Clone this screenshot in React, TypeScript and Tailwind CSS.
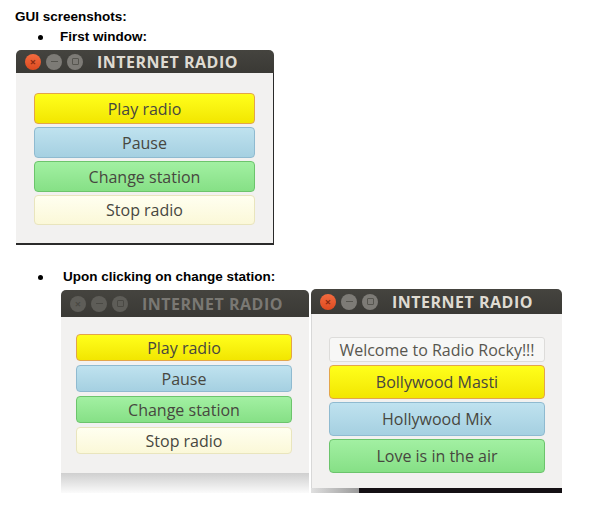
import type { ReactNode } from "react";

type Tone = "yellow" | "blue" | "green" | "cream";

const toneClass: Record<Tone, string> = {
  yellow: "bg-gradient-to-b from-[#ffff1a] to-[#f2e600] border-[#e3a54a]",
  blue: "bg-gradient-to-b from-[#bfe2ef] to-[#a5d0e1] border-[#8fbad0]",
  green: "bg-gradient-to-b from-[#a2f0a2] to-[#86e086] border-[#6cc46c]",
  cream: "bg-gradient-to-b from-[#fffff0] to-[#fbf8d8] border-[#e9e5bd]",
};

function RadioButton({ tone, h, children }: { tone: Tone; h: string; children: ReactNode }) {
  return (
    <div
      className={`flex ${h} items-center justify-center rounded-[4px] border text-[16px] text-[#47473f] ${toneClass[tone]}`}
    >
      {children}
    </div>
  );
}

function TitleBar({ active, h }: { active: boolean; h: string }) {
  return (
    <div
      className={`flex ${h} items-center rounded-t-[5px] bg-gradient-to-b from-[#45443f] to-[#3a3935] pl-[9px]`}
    >
      <div className="flex items-center gap-[5px]">
        <span
          className={`flex h-[16px] w-[16px] items-center justify-center rounded-full text-[11px] font-bold leading-none ${
            active ? "bg-gradient-to-b from-[#f36b3f] to-[#dc4a1f] text-[#8a2a10]" : "bg-[#5e5d58] text-[#4a4944]"
          }`}
        >
          ×
        </span>
        <span
          className={`flex h-[16px] w-[16px] items-center justify-center rounded-full ${
            active ? "bg-[#7d7b76]" : "bg-[#5e5d58]"
          }`}
        >
          <span className={`h-[1.5px] w-[7px] ${active ? "bg-[#56554f]" : "bg-[#4a4944]"}`} />
        </span>
        <span
          className={`flex h-[16px] w-[16px] items-center justify-center rounded-full ${
            active ? "bg-[#7d7b76]" : "bg-[#5e5d58]"
          }`}
        >
          <span className={`h-[7px] w-[7px] rounded-[1px] border ${active ? "border-[#56554f]" : "border-[#4a4944]"}`} />
        </span>
      </div>
      <span
        className={`ml-[14px] text-[16px] font-bold tracking-[0.5px] ${active ? "text-[#dfdbd2]" : "text-[#7a7873]"}`}
      >
        INTERNET RADIO
      </span>
    </div>
  );
}

export default function App() {
  const arial = { fontFamily: "'Liberation Sans', Arial, sans-serif" };
  return (
    <div
      className="relative h-[523px] w-[607px] overflow-hidden bg-white"
      style={{ fontFamily: "'Open Sans', 'Noto Sans', sans-serif" }}
    >
      <div className="pt-[9px] pl-[15px] text-[13.5px] font-bold leading-[16px] text-black" style={arial}>
        GUI screenshots:
      </div>
      <div className="mt-[4px] flex items-center pl-[38px] text-[13.5px] font-bold leading-[16px] text-black" style={arial}>
        <span className="mr-[17px] h-[5px] w-[5px] rounded-full bg-black" />
        First window:
      </div>

      {/* first window */}
      <div className="ml-[16px] mt-[5px] w-[258px]">
        <TitleBar active h="h-[23px]" />
        <div className="flex flex-col gap-[3px] border-b-2 border-r border-[#2a2a2a] bg-[#f2f1f0] px-[18px] pt-[20px] pb-[18px]">
          <RadioButton tone="yellow" h="h-[31px]">Play radio</RadioButton>
          <RadioButton tone="blue" h="h-[31px]">Pause</RadioButton>
          <RadioButton tone="green" h="h-[31px]">Change station</RadioButton>
          <RadioButton tone="cream" h="h-[30px]">Stop radio</RadioButton>
        </div>
      </div>

      <div className="mt-[24px] flex items-center pl-[38px] text-[13.5px] font-bold leading-[16px] text-black" style={arial}>
        <span className="mr-[20px] h-[5px] w-[5px] rounded-full bg-black" />
        Upon clicking on change station:
      </div>

      <div className="mt-[4px] flex items-start pl-[61px]">
        {/* back window (inactive) */}
        <div className="mt-[1px] w-[248px]">
          <TitleBar active={false} h="h-[27px]" />
          <div className="flex flex-col gap-[4px] bg-[#f2f1f0] pl-[15px] pr-[17px] pt-[17px] pb-[19px]">
            <RadioButton tone="yellow" h="h-[27px]">Play radio</RadioButton>
            <RadioButton tone="blue" h="h-[27px]">Pause</RadioButton>
            <RadioButton tone="green" h="h-[27px]">Change station</RadioButton>
            <RadioButton tone="cream" h="h-[27px]">Stop radio</RadioButton>
          </div>
          <div className="h-[20px] bg-gradient-to-b from-[#cfcfcf] to-[#fbfbfb]" />
        </div>

        {/* front window (active) */}
        <div className="ml-[2px] w-[251px]">
          <TitleBar active h="h-[25px]" />
          <div className="flex flex-col gap-[3px] border-l border-[#d8d8d8] bg-[#f2f1f0] px-[17px] pt-[23px] pb-[15px]">
            <div className="flex h-[25px] items-center justify-center rounded-[3px] border border-[#dddcda] bg-[#f7f7f6] text-[16px] text-[#57564f]">
              Welcome to Radio Rocky!!!
            </div>
            <RadioButton tone="yellow" h="h-[34px]">Bollywood Masti</RadioButton>
            <RadioButton tone="blue" h="h-[34px]">Hollywood Mix</RadioButton>
            <RadioButton tone="green" h="h-[34px]">Love is in the air</RadioButton>
          </div>
          <div className="flex h-[5px]">
            <div className="w-[48px] bg-gradient-to-r from-[#e0e0e0] to-[#9a9a9a]" />
            <div className="flex-1 bg-[#141014]" />
          </div>
        </div>
      </div>
    </div>
  );
}
